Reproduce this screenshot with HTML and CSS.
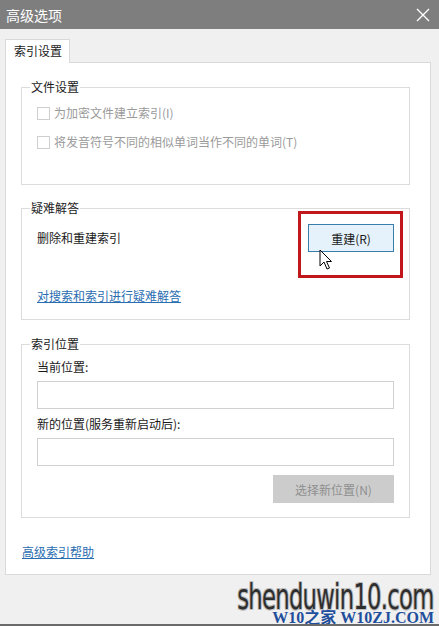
FILE: index.html
```html
<!DOCTYPE html>
<html lang="zh-CN">
<head>
    <meta charset="UTF-8">
    <title>高级选项</title>
    <link rel="stylesheet" href="styles.css">
</head>
<body>
    <div class="window">
        <div class="titlebar">
            <span class="title">高级选项</span>
            <svg class="close" width="14" height="14" viewBox="0 0 14 14">
                <path d="M1 1 L13 13 M13 1 L1 13" stroke="#ffffff" stroke-width="1.4" fill="none"/>
            </svg>
        </div>

        <div class="content">
            <div class="tab">索引设置</div>
            <div class="panel">
                <div class="group group-files">
                    <span class="group-title">文件设置</span>
                    <label class="check-row">
                        <span class="checkbox"></span>
                        为加密文件建立索引(I)
                    </label>
                    <label class="check-row">
                        <span class="checkbox"></span>
                        将发音符号不同的相似单词当作不同的单词(T)
                    </label>
                </div>

                <div class="group group-trouble">
                    <span class="group-title">疑难解答</span>
                    <div class="rebuild-row">
                        <span>删除和重建索引</span>
                        <div class="rebuild-wrap">
                            <button class="btn btn-active">重建(R)</button>
                            <div class="highlight"></div>
                            <!-- mouse pointer over the button -->
                            <svg class="cursor" width="14" height="22" viewBox="0 0 14 22">
                                <path d="M1 1 L1 17 L5 13 L8 20 L10.5 19 L7.5 12.5 L12.5 12.5 Z" fill="#ffffff" stroke="#000000" stroke-width="1"/>
                            </svg>
                        </div>
                    </div>
                    <a class="link trouble-link" href="#">对搜索和索引进行疑难解答</a>
                </div>

                <div class="group group-location">
                    <span class="group-title">索引位置</span>
                    <div class="field-label">当前位置:</div>
                    <div class="field"></div>
                    <div class="field-label">新的位置(服务重新启动后):</div>
                    <div class="field"></div>
                    <div class="field-actions">
                        <button class="btn btn-disabled">选择新位置(N)</button>
                    </div>
                </div>

                <a class="link help-link" href="#">高级索引帮助</a>
            </div>
        </div>

        <div class="watermark">
            <div class="wm-site">shenduwin10.com</div>
            <div class="wm-sub">W10之家 W10ZJ.COM</div>
        </div>
        <div class="bottom-line"></div>
    </div>
</body>
</html>
```

FILE: styles.css
```css
body {
    margin: 0;
    font-family: "Noto Sans CJK SC", "Noto Sans", sans-serif;
    font-size: 12px;
    line-height: 16px;
    color: #1a1a1a;
}

.window {
    position: relative;
    width: 439px;
    height: 626px;
    background-color: #f0f0f0;
    overflow: hidden;
}

.titlebar {
    height: 29px;
    background-color: #7e7e7e;
    display: flex;
    align-items: center;
    justify-content: space-between;
    padding: 0 9px 0 6px;
}

.title {
    color: #ffffff;
    font-size: 14px;
}

.content {
    padding: 10px 8px 0 5px;
}

.tab {
    width: 55px;
    height: 23px;
    padding-left: 8px;
    line-height: 22px;
    background-color: #ffffff;
    border: 1px solid #d9d9d9;
    border-bottom: none;
    position: relative;
    z-index: 1;
    margin-bottom: -1px;
}

.panel {
    height: 513px;
    background-color: #ffffff;
    border: 1px solid #d9d9d9;
    padding: 0 20px 0 15px;
    box-sizing: border-box;
}

.group {
    position: relative;
    border: 1px solid #dcdcdc;
    box-sizing: border-box;
    padding: 0 15px;
}

.group-title {
    position: absolute;
    top: -9px;
    left: 8px;
    padding: 0 1px;
    background-color: #ffffff;
}

.group-files {
    margin-top: 24px;
    height: 98px;
    padding-top: 17px;
}

.check-row {
    display: flex;
    align-items: center;
    gap: 4px;
    color: #9a9a9a;
    margin-bottom: 13px;
}

.checkbox {
    width: 11px;
    height: 11px;
    border: 1px solid #cfcfcf;
    background-color: #ffffff;
}

.group-trouble {
    margin-top: 23px;
    height: 112px;
    padding-top: 15px;
}

.rebuild-row {
    display: flex;
    justify-content: space-between;
    align-items: center;
}

.rebuild-wrap {
    position: relative;
}

.btn {
    font-family: inherit;
    font-size: 12px;
    height: 28px;
    box-sizing: border-box;
    display: block;
}

.btn-active {
    width: 86px;
    background-color: #e5f1fb;
    border: 1px solid #3a7eae;
    color: #1a1a1a;
}

.btn-disabled {
    width: 121px;
    background-color: #cccccc;
    border: 1px solid #cccccc;
    color: #8f8f8f;
}

.highlight {
    position: absolute;
    left: -10px;
    top: -13px;
    width: 105px;
    height: 67px;
    border: 3px solid #c2161d;
    box-sizing: border-box;
}

.cursor {
    position: absolute;
    left: 11px;
    top: 25px;
}

.link {
    color: #2a6db0;
    text-decoration: underline;
    display: inline-block;
}

.trouble-link {
    margin-top: 36px;
}

.group-location {
    margin-top: 24px;
    height: 174px;
    padding-top: 14px;
}

.field-label {
    margin-bottom: 6px;
}

.field {
    height: 28px;
    border: 1px solid #d0d0d0;
    box-sizing: border-box;
    margin-bottom: 7px;
}

.field-actions {
    display: flex;
    justify-content: flex-end;
    padding-top: 2px;
}

.help-link {
    margin-top: 26px;
    margin-left: 1px;
}

.watermark {
    position: absolute;
    right: 5px;
    bottom: 2px;
    display: flex;
    flex-direction: column;
    align-items: flex-end;
}

.wm-site {
    font-family: "DejaVu Sans Condensed", "DejaVu Sans", sans-serif;
    font-size: 36px;
    line-height: 30px;
    height: 28px;
    color: #2e2e2e;
    letter-spacing: -1px;
    transform: scaleX(0.7);
    transform-origin: right center;
    text-shadow: 1px 1px 0 #bdbdbd, -1px -1px 0 #bdbdbd, 1px -1px 0 #bdbdbd, -1px 1px 0 #bdbdbd;
}

.wm-sub {
    font-family: "Liberation Serif", "Noto Sans CJK SC", serif;
    font-weight: bold;
    font-size: 16px;
    line-height: 13px;
    color: #1f4f9c;
    margin-top: 1px;
}

.bottom-line {
    position: absolute;
    left: 0;
    right: 0;
    bottom: 0;
    height: 2px;
    background-color: #6a6a6a;
}
```
